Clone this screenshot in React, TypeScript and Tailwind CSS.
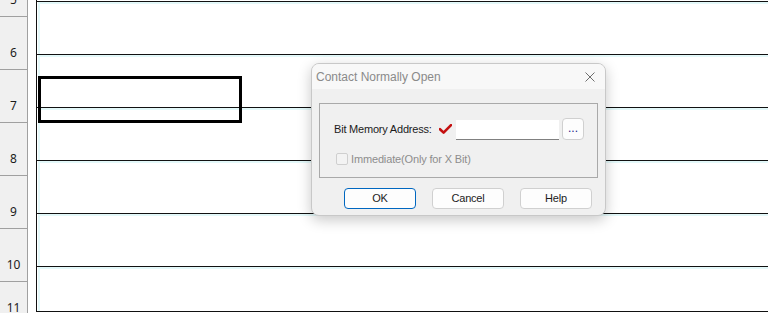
import React from "react";

const GUTTER = [
  { n: "5", h: "h-[17px]" },
  { n: "6", h: "h-[53px]" },
  { n: "7", h: "h-[53px]" },
  { n: "8", h: "h-[53px]" },
  { n: "9", h: "h-[53px]" },
  { n: "10", h: "h-[53px]" },
];

const ROWS = [0, 1, 2, 3, 4, 5];

function CheckMark() {
  return (
    <svg width="13" height="10" viewBox="0 0 13 10" className="shrink-0">
      <path d="M1 5.2 L4.6 8.6 L12 1.2" fill="none" stroke="#c40f0f" strokeWidth="2.6" strokeLinecap="round" strokeLinejoin="round" />
    </svg>
  );
}

function DialogButton({ label, primary }: { label: string; primary?: boolean }) {
  return (
    <button
      className={
        "h-[21px] w-[72px] rounded-[4px] border bg-[#fdfdfd] text-[11px] tracking-[-0.2px] text-[#1b1b1b] " +
        (primary ? "border-[#0067c0]" : "border-[#d0d0d0]")
      }
    >
      {label}
    </button>
  );
}

export default function App() {
  return (
    <div className="relative flex h-[313px] w-[768px] overflow-hidden bg-white font-['Liberation_Sans',Arial,sans-serif]">
      {/* Row gutter */}
      <div className="flex w-[28px] shrink-0 flex-col border-r border-[#a0a0a0] bg-[#f0f0f0] font-['Noto_Sans',sans-serif]">
        {GUTTER.map((g) => (
          <div
            key={g.n}
            className={"flex shrink-0 items-end justify-center border-b border-[#a0a0a0] pb-[8px] text-[12px] leading-[16px] text-[#1b1b1b] " + g.h}
          >
            {g.n}
          </div>
        ))}
        <div className="-mb-[2px] flex flex-1 items-end justify-center text-[12px] leading-[14px] text-[#1b1b1b]">
          11
        </div>
      </div>

      <div className="w-[8px] shrink-0" />

      {/* Ladder grid */}
      <div className="relative h-[312px] flex-1 overflow-hidden border-b border-l border-[#111] pt-[1px]">
        {ROWS.map((r) => (
          <div key={r} className="h-[53px] border-t border-[#111]">
            <div className="ml-[1px] h-full border-l-2 border-t-2 border-[#e3f8f9]" />
          </div>
        ))}
        <div className="absolute left-[1px] top-[76px] h-[47px] w-[204px] border-[3px] border-black" />
      </div>

      {/* Dialog */}
      <div className="absolute left-[311px] top-[63px] flex h-[153px] w-[295px] flex-col overflow-hidden rounded-[8px] border border-[#c8c8c8] bg-[#f0f0f0] shadow-[0_4px_14px_rgba(0,0,0,0.22)]">
        <div className="flex h-[25px] shrink-0 items-center justify-between bg-[#f8f8f8] pl-[4px] pr-[10px]">
          <span className="whitespace-nowrap text-[12px] text-[#8a8a8a]">Contact Normally Open</span>
          <svg width="10" height="10" viewBox="0 0 10 10">
            <path d="M0.5 0.5 L9.5 9.5 M9.5 0.5 L0.5 9.5" stroke="#6e6e6e" strokeWidth="1" />
          </svg>
        </div>

        <div className="mx-[7px] mt-[14px] flex h-[75px] flex-col border border-[#a9a9a9] pl-[14px] pt-[14px]">
          <div className="flex h-[22px] items-center">
            <span className="w-[105px] shrink-0 whitespace-nowrap text-[11px] tracking-[-0.2px] text-[#1b1b1b]">Bit Memory Address:</span>
            <span className="mr-[4px]">
              <CheckMark />
            </span>
            <div className="mt-[1px] h-[20px] w-[103px] border-b border-[#808080] bg-white" />
            <button className="ml-[3px] flex h-[22px] w-[22px] items-start justify-center rounded-[4px] border border-[#d0d0d0] bg-[#fdfdfd] text-[12px] leading-[18px] text-[#25258a]">
              ...
            </button>
          </div>
          <div className="mt-[11px] flex items-center">
            <div className="ml-[2px] h-[12px] w-[12px] rounded-[2px] border border-[#cfcfcf] bg-[#f3f3f3]" />
            <span className="ml-[3px] whitespace-nowrap text-[11px] tracking-[-0.15px] text-[#8d8d8d]">Immediate(Only for X Bit)</span>
          </div>
        </div>

        <div className="mt-[10px] flex gap-[16px] pl-[32px]">
          <DialogButton label="OK" primary />
          <DialogButton label="Cancel" />
          <DialogButton label="Help" />
        </div>
      </div>
    </div>
  );
}
